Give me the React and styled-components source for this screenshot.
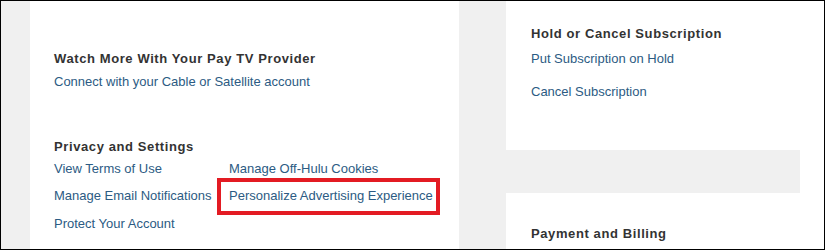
import styled, { createGlobalStyle } from "styled-components";

const GlobalStyle = createGlobalStyle`
  html, body {
    margin: 0;
    padding: 0;
    background: #ffffff;
  }
  * {
    box-sizing: border-box;
  }
`;

const Frame = styled.div`
  display: flex;
  width: 825px;
  height: 250px;
  border: 1px solid #000;
  background: #fff;
  overflow: hidden;
  font-family: "Liberation Sans", Arial, sans-serif;
`;

const Gutter = styled.div`
  flex: 0 0 ${(p) => p.width}px;
  background: #f0f0f0;
`;

const LeftPanel = styled.div`
  flex: 0 0 429px;
  background: #fff;
  padding: 50px 0 0 24px;
`;

const RightColumn = styled.div`
  flex: 0 0 294px;
  display: flex;
  flex-direction: column;
`;

const Card = styled.div`
  background: #fff;
  padding: ${(p) => p.top}px 0 0 25px;
  height: ${(p) => (p.height ? `${p.height}px` : "auto")};
  flex: ${(p) => (p.height ? "0 0 auto" : "1")};
`;

const CardGap = styled.div`
  flex: 0 0 43px;
  background: #f0f0f0;
`;

const Filler = styled.div`
  flex: 1;
  background: #fff;
`;

const Section = styled.div`
  margin-bottom: ${(p) => p.spacing || 0}px;
`;

const Heading = styled.h3`
  margin: 0;
  font-size: 13px;
  line-height: 16px;
  font-weight: bold;
  letter-spacing: 0.6px;
  color: #333333;
`;

const Link = styled.a`
  display: block;
  position: relative;
  width: max-content;
  margin-top: ${(p) => p.gap || 0}px;
  font-size: 13px;
  line-height: 16px;
  color: #2c5b83;
  text-decoration: none;
  cursor: pointer;

  ${(p) =>
    p.highlight &&
    `
    &::after {
      content: "";
      position: absolute;
      left: -12px;
      right: -7px;
      top: -10px;
      bottom: -11px;
      border: 4px solid #e31b23;
    }
  `}
`;

const LinkGrid = styled.div`
  display: grid;
  grid-template-columns: 175px auto;
  row-gap: 11px;
  margin-top: 6px;

  & > :nth-child(5) {
    margin-top: 1px;
  }
`;

export default function App() {
  return (
    <>
      <GlobalStyle />
      <Frame>
        <Gutter width={29} />
        <LeftPanel>
          <Section spacing={49}>
            <Heading>Watch More With Your Pay TV Provider</Heading>
            <Link gap={7}>Connect with your Cable or Satellite account</Link>
          </Section>
          <Section>
            <Heading>Privacy and Settings</Heading>
            <LinkGrid>
              <Link>View Terms of Use</Link>
              <Link>Manage Off-Hulu Cookies</Link>
              <Link>Manage Email Notifications</Link>
              <Link highlight>Personalize Advertising Experience</Link>
              <Link>Protect Your Account</Link>
            </LinkGrid>
          </Section>
        </LeftPanel>
        <Gutter width={47} />
        <RightColumn>
          <Card top={25} height={149}>
            <Heading>Hold or Cancel Subscription</Heading>
            <Link gap={9}>Put Subscription on Hold</Link>
            <Link gap={17}>Cancel Subscription</Link>
          </Card>
          <CardGap />
          <Card top={33}>
            <Heading>Payment and Billing</Heading>
          </Card>
        </RightColumn>
        <Filler />
      </Frame>
    </>
  );
}
